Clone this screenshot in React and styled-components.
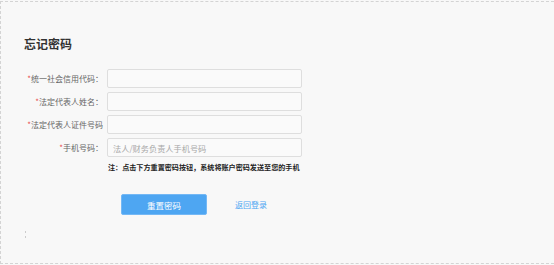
import React from "react";
import styled, { createGlobalStyle } from "styled-components";

const Global = createGlobalStyle`
  html, body { margin: 0; padding: 0; background: #f8f8f8; }
  body { font-family: "Noto Sans CJK SC", "Liberation Sans", sans-serif; }
  * { box-sizing: border-box; }
`;

const Page = styled.div`
  margin-top: 1px;
  height: 263px;
  border-top: 1px dashed #d4d4d4;
  border-left: 1px dashed #d4d4d4;
  border-bottom: 1px dashed #d4d4d4;
  background: #f8f8f8;
  display: flex;
  flex-direction: column;
`;

const Title = styled.h2`
  margin: 34px 0 0 23px;
  font-size: 12px;
  line-height: 16px;
  font-weight: 600;
  color: #333;
`;

const Form = styled.div`
  margin-top: 17px;
  display: flex;
  flex-direction: column;
  gap: 4px;
`;

const Row = styled.div`
  display: grid;
  grid-template-columns: 102px 195px;
  column-gap: 4px;
  align-items: center;
`;

const Label = styled.label`
  text-align: right;
  font-size: 8px;
  line-height: 19px;
  color: #666;
  white-space: nowrap;
`;

const Star = styled.span`
  color: #e85050;
`;

const Input = styled.input`
  width: 195px;
  height: 19px;
  border: 1px solid #dedede;
  border-radius: 2px;
  background: #fafafa;
  padding: 0 5px;
  font-size: 8.2px;
  font-family: inherit;
  color: #333;
  outline: none;
  &::placeholder { color: #a8a8a8; }
`;

const Note = styled.div`
  margin: 5px 0 0 107px;
  font-size: 7.1px;
  line-height: 10px;
  font-weight: 700;
  color: #222;
  white-space: nowrap;
`;

const Actions = styled.div`
  margin: 22px 0 0 120px;
  display: flex;
  align-items: center;
  gap: 28px;
`;

const Button = styled.button`
  width: 86px;
  height: 21px;
  border: 1px solid #74b8f5;
  border-radius: 2px;
  background: #4ea6f2;
  color: #fff;
  font-size: 8.5px;
  font-family: inherit;
  padding: 0;
`;

const Link = styled.a`
  font-size: 8px;
  color: #4ea6f2;
  text-decoration: none;
`;

const Dots = styled.div`
  margin: 16px 0 0 24px;
  width: 2px;
  display: flex;
  flex-direction: column;
  gap: 3px;
  span { display: block; width: 1px; height: 2px; background: #ccc; }
`;

const fields = [
  { label: "统一社会信用代码：" },
  { label: "法定代表人姓名：" },
  { label: "法定代表人证件号码" },
  { label: "手机号码：", placeholder: "法人/财务负责人手机号码" },
];

export default function App() {
  return (
    <>
      <Global />
      <Page>
        <Title>忘记密码</Title>
        <Form>
          {fields.map((f) => (
            <Row key={f.label}>
              <Label>
                <Star>*</Star>
                {f.label}
              </Label>
              <Input placeholder={f.placeholder || ""} />
            </Row>
          ))}
        </Form>
        <Note>注：点击下方重置密码按钮，系统将账户密码发送至您的手机</Note>
        <Actions>
          <Button>重置密码</Button>
          <Link href="#">返回登录</Link>
        </Actions>
        <Dots>
          <span />
          <span />
        </Dots>
      </Page>
    </>
  );
}
